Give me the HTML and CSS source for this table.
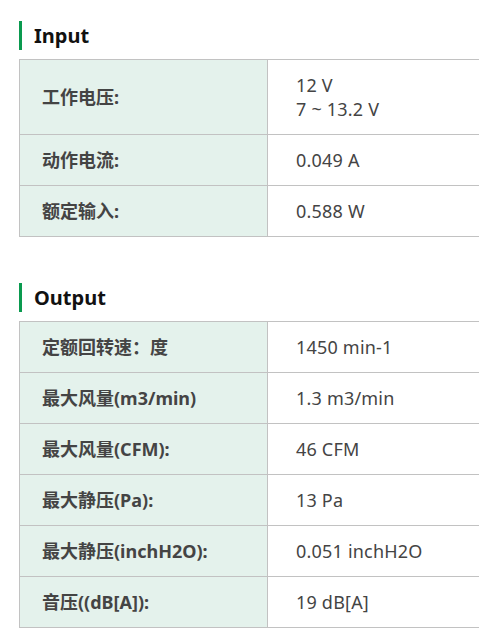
FILE: index.html
```html
<!DOCTYPE html>
<html>
<head>
<meta charset="utf-8">
<link rel="stylesheet" href="styles.css">
</head>
<body>
<div class="page">
  <section class="section">
    <h2 class="title">Input</h2>
    <table class="spec">
      <tr><th>工作电压:</th><td>12 V<br>7 ~ 13.2 V</td></tr>
      <tr><th>动作电流:</th><td>0.049 A</td></tr>
      <tr><th>额定输入:</th><td>0.588 W</td></tr>
    </table>
  </section>
  <section class="section">
    <h2 class="title">Output</h2>
    <table class="spec">
      <tr><th>定额回转速：度</th><td>1450 min-1</td></tr>
      <tr><th>最大风量(m3/min)</th><td>1.3 m3/min</td></tr>
      <tr><th>最大风量(CFM):</th><td>46 CFM</td></tr>
      <tr><th>最大静压(Pa):</th><td>13 Pa</td></tr>
      <tr><th>最大静压(inchH2O):</th><td>0.051 inchH2O</td></tr>
      <tr><th>音压((dB[A]):</th><td>19 dB[A]</td></tr>
    </table>
  </section>
</div>
</body>
</html>
```
FILE: styles.css
```css
html, body {
  margin: 0;
  padding: 0;
  background: #fff;
  overflow: hidden;
}
body {
  font-family: "Noto Sans", "Noto Sans CJK SC", sans-serif;
  color: #444;
}
.page {
  padding: 21px 0 0 19px;
  overflow: hidden;
}
.section + .section {
  margin-top: 46px;
}
.title {
  margin: 0 0 9px 0;
  height: 29px;
  border-left: 3px solid #0a9a4f;
  padding-left: 12px;
  font-size: 20px;
  font-weight: bold;
  line-height: 29px;
  color: #111;
}
.spec {
  border-collapse: collapse;
  width: 500px;
  font-size: 18px;
  line-height: 24px;
}
.spec th, .spec td {
  border: 1px solid #c2c2c2;
  padding: 13px 0 13px 22px;
  text-align: left;
  vertical-align: middle;
}
.spec th {
  width: 225px;
  background: #e4f2ec;
  font-weight: bold;
  color: #444;
}
.spec td {
  padding-left: 28px;
  color: #444;
  letter-spacing: 0.2px;
}
```
